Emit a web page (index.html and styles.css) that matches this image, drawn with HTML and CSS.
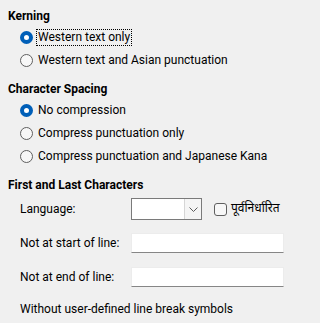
FILE: index.html
```html
<!DOCTYPE html>
<html>
<head>
<meta charset="utf-8">
<link rel="stylesheet" href="styles.css">
</head>
<body>
<div class="panel">
  <div class="heading">Kerning</div>
  <div class="group">
    <div class="option"><span class="radio checked"></span><span class="label focus">Western text only</span></div>
    <div class="option"><span class="radio"></span><span class="label">Western text and Asian punctuation</span></div>
  </div>
  <div class="heading">Character Spacing</div>
  <div class="group">
    <div class="option"><span class="radio checked"></span><span class="label">No compression</span></div>
    <div class="option"><span class="radio"></span><span class="label">Compress punctuation only</span></div>
    <div class="option"><span class="radio"></span><span class="label">Compress punctuation and Japanese Kana</span></div>
  </div>
  <div class="heading">First and Last Characters</div>
  <div class="form">
    <div class="row lang-row">
      <span class="flabel">Language:</span>
      <div class="lang-controls">
        <div class="combo">
          <span class="combo-field"></span>
          <span class="combo-btn">
            <svg width="9" height="5" viewBox="0 0 9 5"><path d="M0.5 0.5 L4.5 4.5 L8.5 0.5" fill="none" stroke="#5c5c5c" stroke-width="1"/></svg>
          </span>
        </div>
        <span class="checkbox"></span>
        <span class="deva">पूर्वनिर्धारित</span>
      </div>
    </div>
    <div class="row field-row">
      <span class="flabel">Not at start of line:</span>
      <span class="input"></span>
    </div>
    <div class="row field-row second">
      <span class="flabel">Not at end of line:</span>
      <span class="input"></span>
    </div>
    <div class="note">Without user-defined line break symbols</div>
  </div>
</div>
</body>
</html>
```

FILE: styles.css
```css
html, body {
  margin: 0;
  padding: 0;
  background: #f0f0f0;
}
body {
  width: 293px;
  height: 323px;
  overflow: hidden;
  font-family: Roboto, "Noto Sans", sans-serif;
  font-size: 12px;
  color: #000;
}
.panel {
  padding: 7px 9px 0 8px;
}
.heading {
  font-weight: bold;
  height: 18px;
  line-height: 18px;
  margin-top: 8px;
}
.heading:first-child {
  margin-top: 0;
}
.group {
  padding-left: 12px;
  margin-top: 1px;
}
.option {
  display: flex;
  align-items: center;
  height: 23px;
}
.radio {
  box-sizing: border-box;
  width: 13px;
  height: 13px;
  border-radius: 50%;
  border: 1px solid #5f5f5f;
  background: #f7f7f7;
  margin-right: 3px;
  flex: none;
}
.radio.checked {
  border: 4px solid #005fb8;
  background: #ffffff;
}
.label {
  border: 1px solid transparent;
  padding: 0 1px;
  line-height: 15px;
  white-space: nowrap;
}
.label.focus {
  border: 1px dotted #000;
}
.form {
  padding-left: 12px;
}
.row {
  display: grid;
  grid-template-columns: 111px 1fr;
  align-items: center;
}
.lang-row {
  margin-top: 4px;
  height: 22px;
}
.lang-controls {
  display: flex;
  align-items: center;
}
.combo {
  box-sizing: border-box;
  width: 71px;
  height: 22px;
  border: 1px solid #7a7a7a;
  background: #fff;
  display: flex;
}
.combo-field {
  flex: 1;
}
.combo-btn {
  box-sizing: border-box;
  width: 17px;
  height: 20px;
  background: #f5f5f5;
  border-left: 1px solid #d6d6d6;
  display: flex;
  align-items: center;
  justify-content: center;
}
.checkbox {
  box-sizing: border-box;
  width: 13px;
  height: 13px;
  border: 1px solid #5f5f5f;
  border-radius: 3px;
  background: #f7f7f7;
  margin-left: 12px;
  margin-right: 4px;
}
.deva {
  font-family: "Noto Sans Devanagari", "Lohit Devanagari", "Noto Sans", sans-serif;
  font-size: 12px;
  white-space: nowrap;
}
.field-row {
  margin-top: 13px;
  height: 20px;
}
.field-row.second {
  margin-top: 14px;
}
.input {
  box-sizing: border-box;
  height: 20px;
  background: #fff;
  border: 1px solid #ececec;
  border-bottom-color: #868686;
}
.note {
  margin-top: 13px;
  line-height: 18px;
}
```
